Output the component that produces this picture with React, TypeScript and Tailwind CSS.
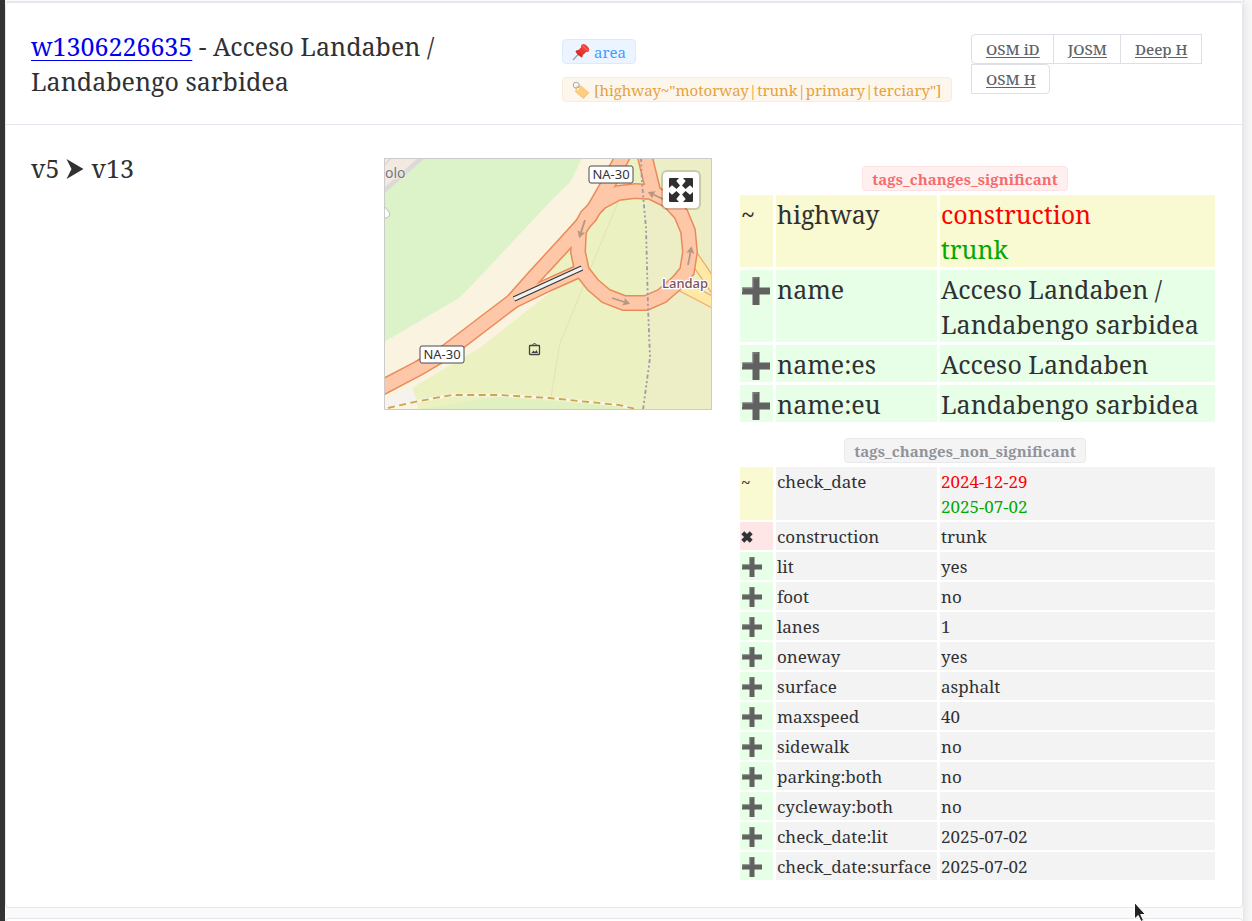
import { Fragment } from 'react'
import type { ReactNode } from 'react'

type Change = { op: 'mod' | 'add' | 'del'; tag: string; values: string[] }

const SIGNIFICANT: Change[] = [
  { op: 'mod', tag: 'highway', values: ['construction', 'trunk'] },
  { op: 'add', tag: 'name', values: ['Acceso Landaben / Landabengo sarbidea'] },
  { op: 'add', tag: 'name:es', values: ['Acceso Landaben'] },
  { op: 'add', tag: 'name:eu', values: ['Landabengo sarbidea'] },
]

const NON_SIGNIFICANT: Change[] = [
  { op: 'mod', tag: 'check_date', values: ['2024-12-29', '2025-07-02'] },
  { op: 'del', tag: 'construction', values: ['trunk'] },
  { op: 'add', tag: 'lit', values: ['yes'] },
  { op: 'add', tag: 'foot', values: ['no'] },
  { op: 'add', tag: 'lanes', values: ['1'] },
  { op: 'add', tag: 'oneway', values: ['yes'] },
  { op: 'add', tag: 'surface', values: ['asphalt'] },
  { op: 'add', tag: 'maxspeed', values: ['40'] },
  { op: 'add', tag: 'sidewalk', values: ['no'] },
  { op: 'add', tag: 'parking:both', values: ['no'] },
  { op: 'add', tag: 'cycleway:both', values: ['no'] },
  { op: 'add', tag: 'check_date:lit', values: ['2025-07-02'] },
  { op: 'add', tag: 'check_date:surface', values: ['2025-07-02'] },
]

const OP_BG = { mod: 'bg-[#f9f9d2]', add: 'bg-[#e6ffe6]', del: 'bg-[#ffe6e6]' }

const TAG_STYLES = {
  primary: 'bg-[#ecf5ff] border-[#d9ecff] text-[#409eff]',
  warning: 'bg-[#fdf6ec] border-[#faecd8] text-[#e6a23c]',
  danger: 'bg-[#fef0f0] border-[#fde2e2] text-[#f56c6c] font-bold',
  info: 'bg-[#f4f4f5] border-[#e9e9eb] text-[#909399] font-bold',
}

const LINKS = ['OSM iD', 'JOSM', 'Deep H', 'OSM H']

function Tag({ type, children }: { type: keyof typeof TAG_STYLES; children: ReactNode }) {
  return (
    <span className={`inline-flex h-[25px] items-center gap-1 whitespace-nowrap rounded border px-[9px] text-[15px] leading-5 ${TAG_STYLES[type]}`}>
      {children}
    </span>
  )
}

function PinIcon() {
  return (
    <svg viewBox="0 0 18 18" className="size-[18px]">
      <path d="M1 17L7 10.500" stroke="#8fa3ad" strokeWidth="1.300" />
      <path d="M3.500 8.200C5 6.700 7.200 6.800 9 8.200C10.800 9.800 11.500 12.500 10 14.500C8.500 14.300 4 10.500 3.500 8.200Z" fill="#d32f2f" />
      <path d="M6 7.500L10 3.500L14.800 8.200L10.800 12.300Z" fill="#e53935" />
      <ellipse cx="13.200" cy="5" rx="2.800" ry="4.800" transform="rotate(-45 13.200 5)" fill="#f44336" />
      <path d="M10.500 2.500L15.500 7.300" stroke="#ff7a6e" strokeWidth="1" />
    </svg>
  )
}

function LabelIcon() {
  return (
    <svg viewBox="0 0 18 18" className="size-[18px]">
      <path d="M3.800 5.500L9 4.200L17 11.500L11.500 17.300L3.300 10.500Z" fill="#ffcc80" />
      <path d="M3.300 10.500L11.500 17.300L17 11.500" fill="none" stroke="#f0b062" strokeWidth="0.800" />
      <circle cx="5.800" cy="7.800" r="1.100" fill="#fff" />
      <circle cx="4.200" cy="4.200" r="3" fill="none" stroke="#90a4ae" strokeWidth="0.900" />
    </svg>
  )
}

function PlusIcon({ className }: { className: string }) {
  return (
    <svg viewBox="0 0 28 28" className={className} role="img" aria-label="added">
      <path d="M10.500 0H17.500V10.500H28V17.500H17.500V28H10.500V17.500H0V10.500H10.500Z" fill="#616161" />
      <path d="M11 10.500V1H16M0.500 15V11H11" fill="none" stroke="#8d8d8d" strokeWidth="1" />
    </svg>
  )
}

function OpIcon({ op, big }: { op: Change['op']; big: boolean }) {
  if (op === 'add') return <PlusIcon className={big ? 'mt-[5px] ml-px block size-7' : 'mt-[3px] ml-px block size-5'} />
  if (op === 'del') {
    return (
      <svg viewBox="0 0 12 12" className="mt-[7px] block size-3" role="img" aria-label="removed">
        <path d="M1.800 1.800L10.200 10.200M10.200 1.800L1.800 10.200" stroke="#303133" strokeWidth="4.200" />
      </svg>
    )
  }
  return <span>~</span>
}

function ChangesTable({ rows, big = false }: { rows: Change[]; big?: boolean }) {
  return (
    <table
      className={`-mx-[3px] w-[calc(100%+6px)] table-fixed border-separate ${
        big ? 'border-spacing-[3px] text-[25px] leading-[35px]' : 'border-spacing-x-[3px] border-spacing-y-[2px] text-[17px] leading-[25px]'
      }`}
    >
      <colgroup>
        <col className="w-[33px]" />
        <col className="w-[161px]" />
        <col />
      </colgroup>
      <tbody>
        {rows.map(row => {
          const bg = big ? OP_BG[row.op] : 'bg-[#f3f3f3]'
          const pad = big ? 'px-px pt-[2px]' : 'px-px pt-[2px] pb-px'
          return (
            <tr key={row.tag} className="align-top">
              <td className={`${pad} ${OP_BG[row.op]}`}><OpIcon op={row.op} big={big} /></td>
              <td className={`${pad} ${bg} whitespace-nowrap`}>{row.tag}</td>
              <td className={`${pad} ${bg}`}>
                {row.op === 'mod' ? (
                  <>
                    <del className="block text-[#ff0000] no-underline">{row.values[0]}</del>
                    <ins className="block text-[#00aa00] no-underline">{row.values[1]}</ins>
                  </>
                ) : row.values[0]}
              </td>
            </tr>
          )
        })}
      </tbody>
    </table>
  )
}

const RING = 'M251 33L267 34L285 43L297 56L304 73L306 94L303 113L294 124L278 138L262 145L240 145L222 138L209 127L198 113L194 94L195 73L203 58L217 44L234 35Z'
const ROADS = [
  { d: 'M-5 231L35 210L62 194L129 143L151 118L176 91L206 58L222 30L240 -4', w: 15 },
  { d: 'M260 -5L269 32', w: 15 },
  { d: 'M127 145L164 127L200 111', w: 13 },
  { d: RING, w: 15 },
]

const ARROWS = [
  { x: 201, y: 62, r: 108 },
  { x: 281, y: 42, r: 205 },
  { x: 304, y: 107, r: -79 },
  { x: 228, y: 140, r: 18 },
]

function Shield({ x, y }: { x: number; y: number }) {
  return (
    <g>
      <rect x={x} y={y} width="44" height="17" rx="2" fill="#fff" stroke="#4a4a4a" />
      <text x={x + 22} y={y + 13} textAnchor="middle" fontSize="13" fill="#333">NA-30</text>
    </g>
  )
}

function MiniMap() {
  return (
    <div className="relative w-[328px] border border-[#cccccc]">
      <svg viewBox="1 1 326 250" className="block w-full font-['Noto_Sans',sans-serif]">
        <rect width="328" height="252" fill="#faf3df" />
        <path d="M0 0H198L187 23L164 46L88 127L75 140L0 184Z" fill="#dcf3c9" />
        <path d="M0 0H41L0 36Z" fill="#dddad6" />
        <path d="M0 0H34L0 30Z" fill="#f2e9e3" />
        <path d="M0 8L7 0" stroke="#c8c8c8" />
        <path d="M0 48L5 54Q7 59 2 60H0Z" fill="#fff" stroke="#bbb" />

        <path d="M243 0L200 60L187 87L164 115L172 130L97 189L28 230L35 252H328V0Z" fill="#ebf1c0" />
        <path d="M258 0L262 70L266 200L259 252H328V0Z" fill="#edeec6" />
        <path d="M0 242L28 230L34 245L0 252Z" fill="#f6f3ef" />
        <path d="M28 252L115 239L250 249V252Z" fill="#e1f0c0" />
        <path d="M234 44L199 129L176 185L167 239" fill="none" stroke="#dfe5b8" />
        <path d="M4 250L35 243L68 237L115 237L165 240L235 247L252 251" fill="none" stroke="#faf6e4" strokeWidth="3" />
        <path d="M4 250L35 243L68 237L115 237L165 240L235 247L252 251" fill="none" stroke="#caa554" strokeWidth="1.800" strokeDasharray="7 4.500" />

        {/* yellow road leaving the roundabout */}
        {['M306 94L332 132', 'M290 124L334 147'].map(d => <path key={d} d={d} fill="none" stroke="#eeaa6c" strokeWidth="12" />)}
        {['M306 94L332 132', 'M290 124L334 147'].map(d => <path key={d} d={d} fill="none" stroke="#ffe9a5" strokeWidth="9.500" />)}

        {ROADS.map(r => <path key={r.d} d={r.d} fill="none" stroke="#ea8a5a" strokeWidth={r.w + 1} />)}
        {ROADS.map(r => <path key={r.d} d={r.d} fill="none" stroke="#fec8a8" strokeWidth={r.w - 2} />)}
        <path d="M130 141L198 110" stroke="#333" strokeWidth="5.500" />
        <path d="M130 141L198 110" stroke="#f1f1f1" strokeWidth="3.500" />

        {ARROWS.map(a => (
          <g key={a.x} transform={`translate(${a.x} ${a.y}) rotate(${a.r})`}>
            <path d="M0 0H13" stroke="#b8967f" strokeWidth="1.800" />
            <path d="M12 -4L19 0L12 4L13 0Z" fill="#b8967f" />
          </g>
        ))}
        <path d="M257 0L258 25L262 70L264 149L266 200L259 252" fill="none" stroke="#9f97a8" strokeWidth="1.800" strokeDasharray="4 2.500 2 2.500 2 2.500" />

        <text x="1" y="20" fontSize="14" fill="#777" stroke="#f2ece6" strokeWidth="2" paintOrder="stroke">olo</text>
        <text x="278" y="130" fontSize="13" fontWeight="500" fill="#7b5160" stroke="#fff" strokeWidth="2.500" paintOrder="stroke">Landap</text>
        <Shield x={205} y={8} />
        <Shield x={36} y={188} />
        <rect x="145.500" y="187.500" width="10" height="9" rx="0.500" fill="none" stroke="#444" strokeWidth="1.300" />
        <path d="M148 187.500L150.500 185L153 187.500" fill="none" stroke="#444" />
        <path d="M147.500 195L149.500 192.500L151 194L152.500 192L154 195Z" fill="#444" />
      </svg>
      <button type="button" aria-label="Fullscreen" className="absolute top-[13px] right-[12px] flex size-9 items-center justify-center rounded bg-white shadow-[0_0_0_2px_rgba(0,0,0,0.15)]">
        <svg viewBox="0 0 24 24" className="size-6" fill="#2f2f2f">
          {[0, 90, 180, 270].map(r => (
            <path key={r} transform={`rotate(${r} 12 12)`} d="M0 1Q0 0 1 0H10L7.300 3L11 7.500L7.500 11L3 7.300L0 10Z" />
          ))}
        </svg>
      </button>
    </div>
  )
}

function LinkGroup() {
  const corners = ['rounded-l', '', '', 'rounded-r']
  return (
    <div className="flex flex-wrap pl-px">
      {LINKS.map((label, i) => (
        <a
          key={label}
          href="#"
          className={`-ml-px flex h-[30px] items-center border border-[#dcdfe6] pr-[13px] pl-[14px] text-[15px] font-medium text-[#606266] underline underline-offset-2 ${corners[i]}`}
        >
          {label}
        </a>
      ))}
    </div>
  )
}

export default function App() {
  return (
    <div className="relative min-h-screen overflow-hidden border-l-[5px] border-[#333333] bg-[#fafafa] pr-2 font-['Noto_Serif','DejaVu_Serif_Condensed','DejaVu_Serif',serif] text-[#303133]">
      <main className="min-h-screen border-r border-[#e4e7ed] bg-[#fafafa] pt-px shadow-[0_0_12px_rgba(0,0,0,0.12)]">
        <div className="border-t border-[#e4e7ed]">
          <article className="rounded border border-[#e4e7ed] bg-white">
            <header className="grid grid-cols-[531fr_409fr_246fr] border-b border-[#e4e7ed] px-[25px] pt-[26px] pb-[22px]">
              <h1 className="pr-20 text-[25px] leading-[35px]">
                <a href="#" className="text-[#0000ee] underline decoration-1 underline-offset-4">w1306226635</a>
                <span> - Acceso Landaben / Landabengo sarbidea</span>
              </h1>
              <div className="flex flex-col items-start gap-[13px] pt-[10px]">
                <Tag type="primary"><PinIcon />area</Tag>
                <Tag type="warning"><LabelIcon />[highway~"motorway|trunk|primary|terciary"]</Tag>
              </div>
              <div className="pt-[5px]"><LinkGroup /></div>
            </header>

            <div className="grid grid-cols-[353fr_331fr_500fr] pt-[26px] pr-[27px] pb-[25px] pl-[25px]">
              <p className="flex items-start gap-[7px] text-[25px] leading-[35px]">
                v5
                <svg viewBox="0 0 17 20" className="mt-2 h-5 w-[18px]" role="img" aria-label="to">
                  <path d="M0 0L17 10L0 20L5 10Z" fill="#303133" />
                </svg>
                v13
              </p>
              <div className="pt-[7px]"><MiniMap /></div>
              <div className="pt-[15px]">
                {[
                  { type: 'danger' as const, title: 'tags_changes_significant', rows: SIGNIFICANT, big: true },
                  { type: 'info' as const, title: 'tags_changes_non_significant', rows: NON_SIGNIFICANT, big: false },
                ].map(s => (
                  <Fragment key={s.title}>
                    <div className="flex justify-center">
                      <Tag type={s.type}>{s.title}</Tag>
                    </div>
                    <div className={s.big ? 'mt-px mb-[13px] ml-[25px]' : 'mt-[2px] ml-[25px]'}>
                      <ChangesTable rows={s.rows} big={s.big} />
                    </div>
                  </Fragment>
                ))}
              </div>
            </div>
          </article>
          <article className="mt-[10px] h-5 rounded border border-[#e4e7ed] bg-white" />
        </div>
      </main>
      <svg viewBox="0 0 14 22" className="absolute top-[901px] left-[1128px] h-[22px] w-[14px]">
        <path d="M1.500 1.500V18L5.200 14.500L8 20.500L10.500 19.300L7.700 13.500H12.500Z" fill="#222" stroke="#fff" />
      </svg>
    </div>
  )
}
